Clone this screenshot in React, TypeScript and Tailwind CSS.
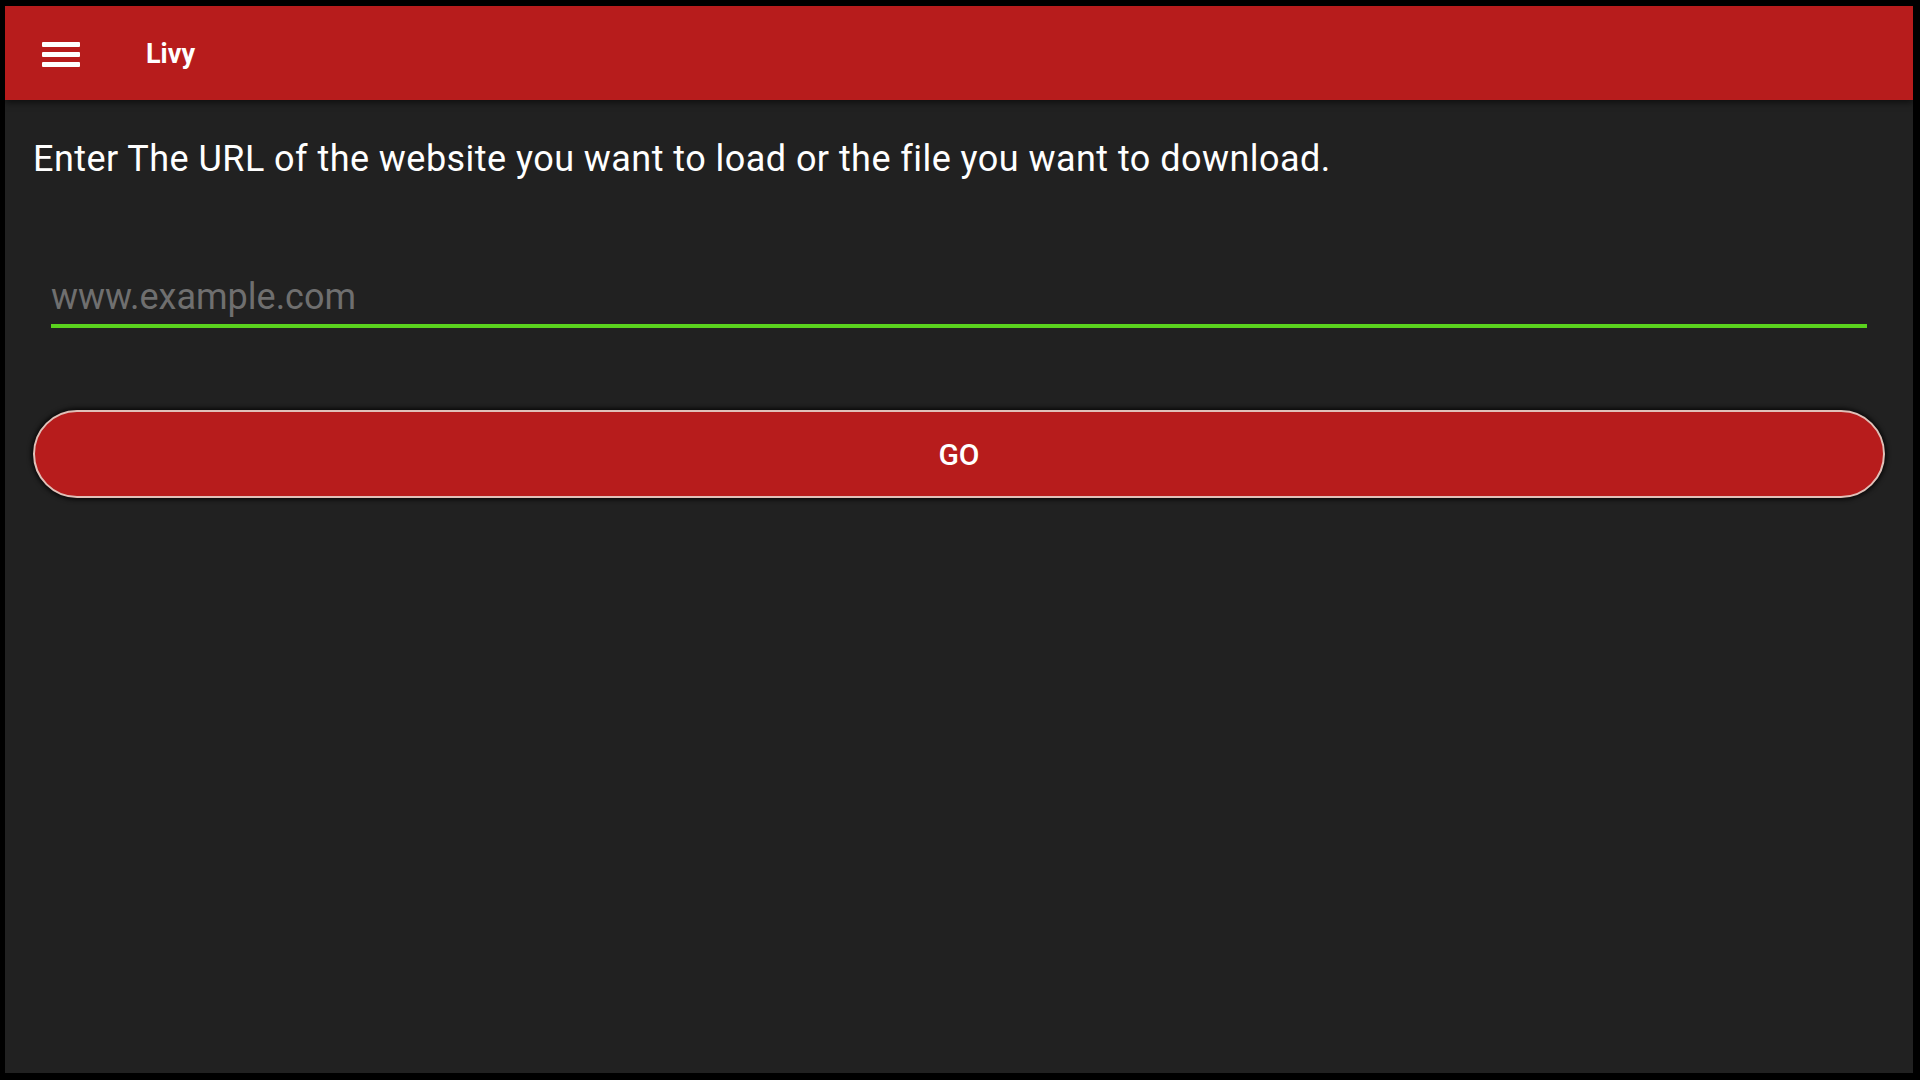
import React, { useState } from "react";

const App = () => {
  const [url, setUrl] = useState("");

  return (
    <div className="w-[1920px] h-[1080px] bg-black pl-[5px] pt-[6px] pr-[7px] pb-[7px] font-['Roboto',sans-serif]">
      <div className="flex flex-col h-full bg-[#212121]">
        {/* toolbar */}
        <div className="flex items-center h-[94px] pt-[3px] bg-[#b71c1c] shadow-[0_3px_6px_rgba(0,0,0,0.5)] shrink-0">
          <button className="ml-[37px] w-[38px] flex flex-col gap-[5px]">
            <span className="block h-[5px] bg-white rounded-[1px]" />
            <span className="block h-[5px] bg-white rounded-[1px]" />
            <span className="block h-[5px] bg-white rounded-[1px]" />
          </button>
          <div className="ml-[66px] text-white text-[27px] font-bold">Livy</div>
        </div>

        <div className="flex flex-col px-[28px]">
          <p className="mt-[38px] text-white text-[36px] leading-[42px] tracking-[0.45px] whitespace-nowrap">
            Enter The URL of the website you want to load or the file you want to download.
          </p>

          <div className="mt-[96px] mx-[18px]">
            <input
              value={url}
              onChange={(e) => setUrl(e.target.value)}
              placeholder="www.example.com"
              className="w-full bg-transparent outline-none text-white text-[36px] leading-[42px] placeholder:text-[#6f6f6f] pb-[6px] border-b-[4px] border-[#5ad21e]"
            />
          </div>

          <button className="mt-[82px] h-[88px] w-full rounded-full bg-[#b71c1c] border-2 border-[#e0c0b8] shadow-[0_0_4px_2px_rgba(0,0,0,0.7)] text-white text-[30px] font-medium">
            GO
          </button>
        </div>
      </div>
    </div>
  );
};

export default App;
